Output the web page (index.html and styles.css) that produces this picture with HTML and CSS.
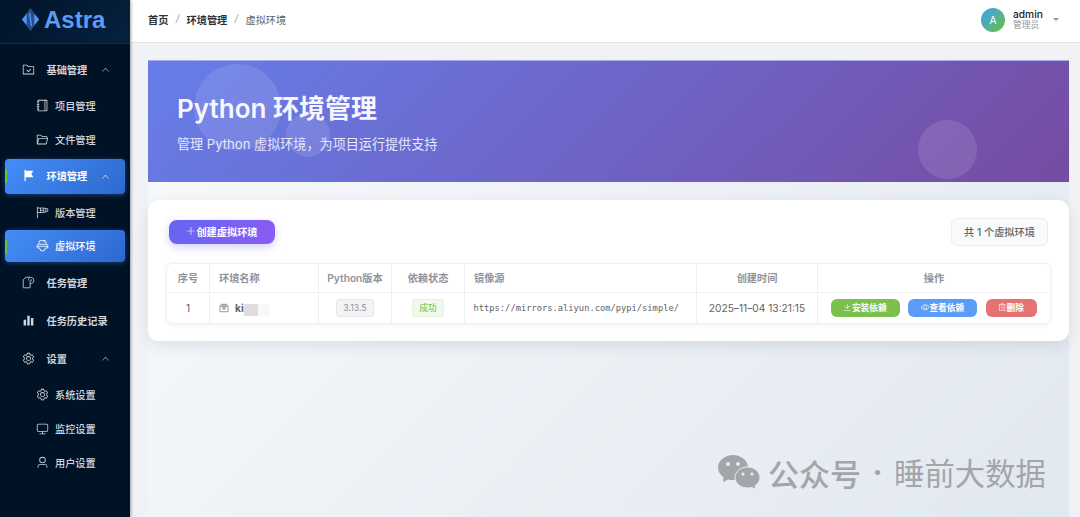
FILE: index.html
```html
<!DOCTYPE html>
<html lang="zh-CN">
<head>
  <meta charset="UTF-8">
  <title>Astra</title>
  <link rel="stylesheet" href="styles.css">
</head>
<body>

  <svg class="sprite">
    <symbol id="arrow-up" viewBox="0 0 1024 1024"><path d="m488.832 344.32-339.84 356.672a32 32 0 0 0 0 44.16l.384.384a29.44 29.44 0 0 0 42.688 0l320-335.872 319.872 335.872a29.44 29.44 0 0 0 42.688 0l.384-.384a32 32 0 0 0 0-44.16L535.168 344.32a32 32 0 0 0-46.336 0"/></symbol>
    <symbol id="folder-checked" viewBox="0 0 1024 1024"><path d="M128 192v640h768V320H485.76L357.504 192zm-32-64h287.872l128.384 128H928a32 32 0 0 1 32 32v576a32 32 0 0 1-32 32H96a32 32 0 0 1-32-32V160a32 32 0 0 1 32-32m414.08 502.144 180.992-180.992L736.32 494.4 510.08 720.64l-158.4-158.336 45.312-45.312z"/></symbol>
    <symbol id="notebook" viewBox="0 0 1024 1024"><path d="M192 128v768h640V128zm-32-64h704a32 32 0 0 1 32 32v832a32 32 0 0 1-32 32H160a32 32 0 0 1-32-32V96a32 32 0 0 1 32-32M672 128h64v768h-64zM64 192h192v64H64zm0 192h192v64H64zm0 192h192v64H64zm0 192h192v64H64z"/></symbol>
    <symbol id="folder-opened" viewBox="0 0 1024 1024"><path d="M878.08 448H241.92l-96 384h636.16zM832 384v-64H485.76L357.504 192H128v448l57.92-231.744A32 32 0 0 1 216.96 384zm-24.96 512H96a32 32 0 0 1-32-32V160a32 32 0 0 1 32-32h287.872l128.384 128H864a32 32 0 0 1 32 32v96h23.04a32 32 0 0 1 31.04 39.744l-112 448A32 32 0 0 1 807.04 896"/></symbol>
    <symbol id="flag" viewBox="0 0 1024 1024"><path d="M288 128h608L736 384l160 256H288v320h-96V64h96z"/></symbol>
    <symbol id="windsock" viewBox="0 0 1024 1024"><path class="line" d="M112 64v896M112 160h496l320 64v192l-320 96H112M352 160v352M608 160v352M352 336h256M768 200v256"/></symbol>
    <symbol id="env" viewBox="0 0 1024 1024"><path class="line" d="M288 128h448l64 192v96H224v-96zM224 384 96 480v224h192v96l96 32v96h256v-96l96-32v-96h192V480l-128-96M64 576h896M640 128v128"/></symbol>
    <symbol id="task" viewBox="0 0 1024 1024"><path class="line" d="M608 96H320L96 288v640h544V608M608 96c200 0 320 80 320 256S800 608 640 608V352M608 96c-80 60-96 140-96 256M720 256v160"/></symbol>
    <symbol id="histogram" viewBox="0 0 1024 1024"><path d="M416 896V128h192v768zm-288 0V448h192v448zm576 0V320h192v576z"/></symbol>
    <symbol id="setting" viewBox="0 0 1024 1024"><path d="M600.704 64a32 32 0 0 1 30.464 22.208l35.2 109.376c14.784 7.232 28.928 15.36 42.432 24.512l112.384-24.192a32 32 0 0 1 34.432 15.36L944.32 364.8a32 32 0 0 1-4.032 37.504l-77.12 85.12a357.12 357.12 0 0 1 0 49.024l77.12 85.248a32 32 0 0 1 4.032 37.504l-88.704 153.6a32 32 0 0 1-34.432 15.296L708.8 803.904c-13.44 9.088-27.648 17.28-42.368 24.512l-35.264 109.376A32 32 0 0 1 600.704 960H423.296a32 32 0 0 1-30.464-22.208L357.696 828.48a351.616 351.616 0 0 1-42.56-24.64l-112.32 24.256a32 32 0 0 1-34.432-15.36L79.68 659.2a32 32 0 0 1 4.032-37.504l77.12-85.248a357.12 357.12 0 0 1 0-48.896l-77.12-85.248A32 32 0 0 1 79.68 364.8l88.704-153.6a32 32 0 0 1 34.432-15.296l112.32 24.256c13.568-9.152 27.776-17.408 42.56-24.64l35.2-109.312A32 32 0 0 1 423.232 64H600.64zm-23.424 64H446.72l-36.352 113.088-24.512 11.968a294.113 294.113 0 0 0-34.816 20.096l-22.656 15.36-116.224-25.088-65.28 113.152 79.68 88.192-1.92 27.136a293.12 293.12 0 0 0 0 40.192l1.92 27.136-79.808 88.192 65.344 113.152 116.224-25.024 22.656 15.296a294.113 294.113 0 0 0 34.816 20.096l24.512 11.968L446.72 896h130.688l36.48-113.152 24.448-11.904a288.282 288.282 0 0 0 34.752-20.096l22.592-15.296 116.288 25.024 65.28-113.152-79.744-88.192 1.92-27.136a293.12 293.12 0 0 0 0-40.256l-1.92-27.136 79.808-88.128-65.344-113.152-116.288 24.96-22.592-15.232a287.616 287.616 0 0 0-34.752-20.096l-24.448-11.904L577.344 128zM512 320a192 192 0 1 1 0 384 192 192 0 0 1 0-384m0 64a128 128 0 1 0 0 256 128 128 0 0 0 0-256"/></symbol>
    <symbol id="monitor" viewBox="0 0 1024 1024"><path d="M544 768v128h192a32 32 0 1 1 0 64H288a32 32 0 1 1 0-64h192V768H192A128 128 0 0 1 64 640V256a128 128 0 0 1 128-128h640a128 128 0 0 1 128 128v384a128 128 0 0 1-128 128zM192 192a64 64 0 0 0-64 64v384a64 64 0 0 0 64 64h640a64 64 0 0 0 64-64V256a64 64 0 0 0-64-64z"/></symbol>
    <symbol id="user" viewBox="0 0 1024 1024"><path d="M512 512a192 192 0 1 0 0-384 192 192 0 0 0 0 384m0 64a256 256 0 1 1 0-512 256 256 0 0 1 0 512m320 320v-96a96 96 0 0 0-96-96H288a96 96 0 0 0-96 96v96a32 32 0 1 1-64 0v-96a160 160 0 0 1 160-160h448a160 160 0 0 1 160 160v96a32 32 0 1 1-64 0"/></symbol>
    <symbol id="plus" viewBox="0 0 1024 1024"><path d="M480 480V128a32 32 0 0 1 64 0v352h352a32 32 0 1 1 0 64H544v352a32 32 0 1 1-64 0V544H128a32 32 0 0 1 0-64z"/></symbol>
    <symbol id="box" viewBox="0 0 1024 1024"><path class="line" d="M96 320v576h832V320L768 128H256zM96 320h832M384 128v480h256V128M512 320v160"/></symbol>
    <symbol id="download" viewBox="0 0 1024 1024"><path d="M160 832h704a32 32 0 1 1 0 64H160a32 32 0 1 1 0-64m384-253.696 236.288-236.352 45.248 45.248L508.8 704 192 387.2l45.248-45.248L480 584.704V128h64z"/></symbol>
    <symbol id="view" viewBox="0 0 1024 1024"><path d="M512 160c320 0 512 352 512 352S832 864 512 864 0 512 0 512s192-352 512-352m0 64c-225.28 0-384.128 208.064-436.8 288 52.608 79.872 211.456 288 436.8 288 225.28 0 384.128-208.064 436.8-288-52.608-79.872-211.456-288-436.8-288m0 64a224 224 0 1 1 0 448 224 224 0 0 1 0-448m0 64a160.19 160.19 0 0 0-160 160c0 88.192 71.744 160 160 160s160-71.808 160-160-71.744-160-160-160"/></symbol>
    <symbol id="delete" viewBox="0 0 1024 1024"><path d="M160 256H96a32 32 0 0 1 0-64h256V95.936a32 32 0 0 1 32-32h256a32 32 0 0 1 32 32V192h256a32 32 0 1 1 0 64h-64v672a32 32 0 0 1-32 32H192a32 32 0 0 1-32-32zm448-64v-64H416v64zM224 896h576V256H224zm192-128a32 32 0 0 1-32-32V416a32 32 0 0 1 64 0v320a32 32 0 0 1-32 32m192 0a32 32 0 0 1-32-32V416a32 32 0 0 1 64 0v320a32 32 0 0 1-32 32"/></symbol>
  </svg>

  <div class="layout">
    <aside class="sidebar">
      <div class="logo">
        <svg class="logo-icon" viewBox="0 0 20 26">
          <path class="logo-shape" d="M10 1 19 13 10 25 1 13z"/>
          <path class="logo-side" d="M6 7 1 13l5 6zM14 7l5 6-5 6z"/>
          <path class="logo-line" d="M9 6l2 14"/>
        </svg>
        <span>Astra</span>
      </div>
      <nav class="menu">
        <div class="item"><svg class="icon"><use href="#folder-checked"/></svg><span>基础管理</span><svg class="arrow"><use href="#arrow-up"/></svg></div>
        <div class="item sub"><svg class="icon"><use href="#notebook"/></svg><span>项目管理</span></div>
        <div class="item sub"><svg class="icon"><use href="#folder-opened"/></svg><span>文件管理</span></div>
        <div class="item active"><svg class="icon"><use href="#flag"/></svg><span>环境管理</span><svg class="arrow"><use href="#arrow-up"/></svg></div>
        <div class="item sub"><svg class="icon"><use href="#windsock"/></svg><span>版本管理</span></div>
        <div class="item sub active"><svg class="icon"><use href="#env"/></svg><span>虚拟环境</span></div>
        <div class="item"><svg class="icon"><use href="#task"/></svg><span>任务管理</span></div>
        <div class="item"><svg class="icon"><use href="#histogram"/></svg><span>任务历史记录</span></div>
        <div class="item"><svg class="icon"><use href="#setting"/></svg><span>设置</span><svg class="arrow"><use href="#arrow-up"/></svg></div>
        <div class="item sub"><svg class="icon"><use href="#setting"/></svg><span>系统设置</span></div>
        <div class="item sub"><svg class="icon"><use href="#monitor"/></svg><span>监控设置</span></div>
        <div class="item sub"><svg class="icon"><use href="#user"/></svg><span>用户设置</span></div>
      </nav>
    </aside>

    <div class="right">
      <header class="topbar">
        <div class="breadcrumb">
          <b>首页</b><i>/</i><b>环境管理</b><i>/</i><span>虚拟环境</span>
        </div>
        <div class="user">
          <div class="avatar">A</div>
          <div class="user-info">
            <p class="name">admin</p>
            <p class="role">管理员</p>
          </div>
          <div class="caret"></div>
        </div>
      </header>

      <main class="content">
        <section class="banner">
          <div class="circle c1"></div>
          <div class="circle c2"></div>
          <div class="circle c3"></div>
          <h1>Python 环境管理</h1>
          <p>管理 Python 虚拟环境，为项目运行提供支持</p>
        </section>

        <section class="card">
          <div class="toolbar">
            <button class="create"><svg><use href="#plus"/></svg>创建虚拟环境</button>
            <div class="total">共 1 个虚拟环境</div>
          </div>
          <div class="table">
            <div class="row head">
              <div class="cell center">序号</div>
              <div class="cell">环境名称</div>
              <div class="cell center">Python版本</div>
              <div class="cell center">依赖状态</div>
              <div class="cell">镜像源</div>
              <div class="cell center">创建时间</div>
              <div class="cell center">操作</div>
            </div>
            <div class="row">
              <div class="cell center">1</div>
              <div class="cell env-name"><svg><use href="#box"/></svg><b>ki</b><span class="mask"></span><span class="mask light"></span></div>
              <div class="cell center"><span class="tag">3.13.5</span></div>
              <div class="cell center"><span class="tag success">成功</span></div>
              <div class="cell url">https://mirrors.aliyun.com/pypi/simple/</div>
              <div class="cell center">2025–11–04 13:21:15</div>
              <div class="cell center actions">
                <button class="btn green"><svg><use href="#download"/></svg>安装依赖</button>
                <button class="btn blue"><svg><use href="#view"/></svg>查看依赖</button>
                <button class="btn red"><svg><use href="#delete"/></svg>删除</button>
              </div>
            </div>
          </div>
        </section>
      </main>
    </div>
  </div>

  <div class="watermark">
    <svg viewBox="0 0 42 35">
      <path d="M15 0C6.700 0 0 5.600 0 12.600c0 4 2.200 7.400 5.500 9.700L5 27l5-2.600c1.600.5 3.300.7 5 .7C23.300 25.100 30 19.500 30 12.600S23.300 0 15 0z"/>
      <path class="bubble" d="M29.500 12C22.600 12 17 16.700 17 22.500S22.600 33 29.500 33c1.500 0 3-.2 4.300-.6l4.200 2.200-.8-4C40.200 28.700 42 25.800 42 22.500 42 16.700 36.400 12 29.500 12z"/>
      <g class="eyes"><circle cx="10" cy="9" r="1.900"/><circle cx="20" cy="9" r="1.900"/><circle cx="25" cy="19" r="1.600"/><circle cx="34" cy="19" r="1.600"/></g>
    </svg>
    <span class="label">公众号</span><span class="dot">·</span><span>睡前大数据</span>
  </div>

</body>
</html>
```
FILE: styles.css
```css
* {
  margin: 0;
  padding: 0;
  box-sizing: border-box;
}

body {
  font-family: Inter, 'Noto Sans CJK SC', sans-serif;
  font-size: 10.2px;
  color: #606266;
  background: #f0f2f5;
  overflow: hidden;
}

.sprite {
  display: none;
}

svg {
  fill: currentColor;
  flex-shrink: 0;
}

.line {
  fill: none;
  stroke: currentColor;
  stroke-width: 64;
}

.layout {
  display: flex;
  height: 517px;
}

/* sidebar */
.sidebar {
  width: 130px;
  flex-shrink: 0;
  background: #001226;
  box-shadow: 1px 0 3px rgba(0, 0, 0, 0.35);
  z-index: 1;
}

.logo {
  height: 44px;
  display: flex;
  align-items: center;
  gap: 4px;
  padding: 0 0 4px 21px;
  background: linear-gradient(135deg, #001429, #06213f);
  border-bottom: 1px solid #1a2c42;
  color: #5a9cf8;
  font-family: 'Liberation Sans', sans-serif;
  font-size: 24px;
  font-weight: bold;
}

.logo-icon {
  width: 19px;
  height: 25px;
}

.logo-shape {
  fill: #254d86;
}

.logo-side {
  fill: #5197f3;
}

.logo-line {
  stroke: #5197f3;
  stroke-width: 1.5;
}

.menu {
  padding: 8px 5px 0;
}

.item {
  height: 35px;
  margin-bottom: 3px;
  padding-left: 17px;
  display: flex;
  align-items: center;
  position: relative;
  color: #d2d6dc;
  font-weight: 700;
}

.item span {
  margin-top: -1px;
}

.item .icon {
  width: 13px;
  height: 13px;
  margin-right: 11.5px;
}

.item .arrow {
  width: 9px;
  height: 9px;
  position: absolute;
  right: 15px;
}

.sub {
  height: 32px;
  margin-bottom: 1.7px;
  padding-left: 31px;
  font-weight: 500;
}

.sub + .item:not(.sub) {
  margin-top: 3px;
}

.item .icon {
  margin-top: -1px;
}

.sub .icon {
  margin-right: 6px;
}

.active {
  color: #fff;
  background: linear-gradient(135deg, #448ef7, #2e68cf);
  border-radius: 4px;
  box-shadow: 0 1px 5px rgba(64, 140, 250, 0.4);
}

.active::before {
  content: '';
  position: absolute;
  left: 0;
  top: 10px;
  width: 2px;
  height: 14px;
  background: #67c23a;
}

/* topbar */
.right {
  flex: 1;
}

.topbar {
  height: 42px;
  padding: 0 21px 3px 18px;
  display: flex;
  align-items: center;
  justify-content: space-between;
  background: #fff;
  box-shadow: 0 1px 1px rgba(0, 0, 0, 0.05);
}

.breadcrumb {
  display: flex;
  margin-top: -1px;
}

.breadcrumb b {
  color: #303133;
}

.breadcrumb i {
  width: 18.2px;
  text-align: center;
  color: #a0a3a9;
}

.user {
  display: flex;
  align-items: center;
}

.avatar {
  width: 24px;
  height: 24px;
  margin-right: 8px;
  border-radius: 50%;
  background: linear-gradient(135deg, #409eff, #67c23a);
  color: #fff;
  text-align: center;
  line-height: 24px;
}

.user-info {
  width: 40px;
  margin-top: -2px;
}

.name {
  color: #222;
  font-weight: 500;
  line-height: 12px;
}

.role {
  color: #909399;
  font-size: 8.7px;
  line-height: 10px;
}

.caret {
  border: 3px solid transparent;
  border-top: 3.5px solid #909399;
  border-bottom: 0;
}

/* content */
.content {
  width: 921px;
  height: 457px;
  margin: 18px 0 0 18px;
  background: linear-gradient(135deg, #f8fafc, #e2e8f0);
}

.banner {
  height: 122px;
  padding: 30px 29px;
  position: relative;
  overflow: hidden;
  background: linear-gradient(135deg, #667eea 0%, #764ba2 100%);
  border-top: 1px solid #a9ace6;
  color: #f6f6ff;
}

.banner h1 {
  font-size: 26px;
  line-height: 36px;
  font-weight: 600;
  position: relative;
}

.banner p {
  margin-top: 7px;
  font-size: 13.1px;
  line-height: 20px;
  position: relative;
  color: #e5e7fa;
}

.circle {
  position: absolute;
  border-radius: 50%;
  background: rgba(255, 255, 255, 0.11);
}

.c1 {
  left: 46px;
  top: 3px;
  width: 87px;
  height: 87px;
}

.c2 {
  left: 138px;
  top: 52px;
  width: 44px;
  height: 44px;
}

.c3 {
  left: 770px;
  top: 59px;
  width: 59px;
  height: 59px;
}

.card {
  height: 141px;
  margin-top: 18px;
  padding: 18px 18px 0;
  background: #fff;
  border-radius: 11px;
  box-shadow: 0 5px 16px rgba(0, 0, 0, 0.09);
}

.toolbar {
  display: flex;
  justify-content: space-between;
  align-items: center;
  padding: 0 3px;
}

button {
  border: 0;
  color: #fff;
  font-family: inherit;
  font-weight: 700;
  display: flex;
  align-items: center;
  justify-content: center;
}

.create {
  width: 106px;
  height: 24px;
  padding-bottom: 2px;
  border-radius: 8px;
  font-size: 10.2px;
  background: linear-gradient(135deg, #6366f1, #8b5cf6);
  box-shadow: 0 3px 9px rgba(99, 102, 241, 0.3);
}

.create svg {
  width: 10px;
  height: 10px;
}

.total {
  width: 97px;
  height: 28px;
  line-height: 26px;
  text-align: center;
  border: 1px solid #e9edf2;
  border-radius: 6px;
  background: #f8fafc;
  font-weight: 500;
}

.table {
  margin-top: 17px;
  border: 1px solid #eef0f7;
  border-radius: 6px;
  box-shadow: 0 1px 5px rgba(0, 0, 0, 0.06);
  overflow: hidden;
}

.row {
  height: 30px;
  display: grid;
  grid-template-columns: 43px 109px 73px 73px 232px 121px 1fr;
}

.head {
  height: 29px;
  border-bottom: 1px solid #eef0f5;
  color: #909399;
  font-weight: 600;
}

.cell {
  display: flex;
  align-items: center;
  padding: 0 9px;
  border-right: 1px solid #eef0f7;
  white-space: nowrap;
}

.cell:last-child {
  border-right: 0;
}

.center {
  justify-content: center;
  padding: 0;
}

.head .cell {
  padding-bottom: 2px;
}

.row .url {
  padding-left: 8.5px;
  padding-bottom: 1px;
}

.env-name svg {
  width: 10px;
  height: 10px;
  margin-right: 6px;
}

.mask {
  width: 14px;
  height: 12px;
  margin: 4px 0 0;
  background: #dedede;
}

.light {
  width: 12px;
  background: #f8f8f8;
}

.tag {
  height: 18px;
  padding: 0 6.5px;
  border: 1px solid #e6e7ea;
  border-radius: 3px;
  background: #f4f4f5;
  color: #909399;
  font-size: 8.7px;
  line-height: 16px;
}

.success {
  border-color: #e1f3d8;
  background: #f0f9eb;
  color: #67c23a;
}

.url {
  font-family: 'DejaVu Sans Mono', monospace;
  font-size: 8.75px;
}

.row .actions {
  gap: 8.5px;
  padding-right: 1px;
}

.btn {
  width: 69px;
  height: 18px;
  padding-bottom: 1px;
  border-radius: 6px;
  font-size: 8.7px;
}

.btn svg {
  width: 8.5px;
  height: 8.5px;
}

.green {
  background: #7bc04c;
}

.blue {
  background: #5b9cf8;
}

.red {
  width: 51px;
  background: #e57373;
}

/* watermark lies over the page */
.watermark {
  position: absolute;
  left: 718px;
  top: 450px;
  height: 44px;
  display: flex;
  align-items: center;
  color: #a3a5a9;
  font-size: 30.4px;
  font-weight: 400;
}

.watermark svg {
  width: 42px;
  height: 35px;
  margin: 0 8px 0 0;
}

.bubble {
  stroke: #e9edf3;
  stroke-width: 1;
}

.eyes {
  fill: #e9edf3;
}

.label {
  font-size: 31px;
  font-weight: 500;
}

.dot {
  width: 33px;
  text-align: center;
  font-weight: 700;
}
```
